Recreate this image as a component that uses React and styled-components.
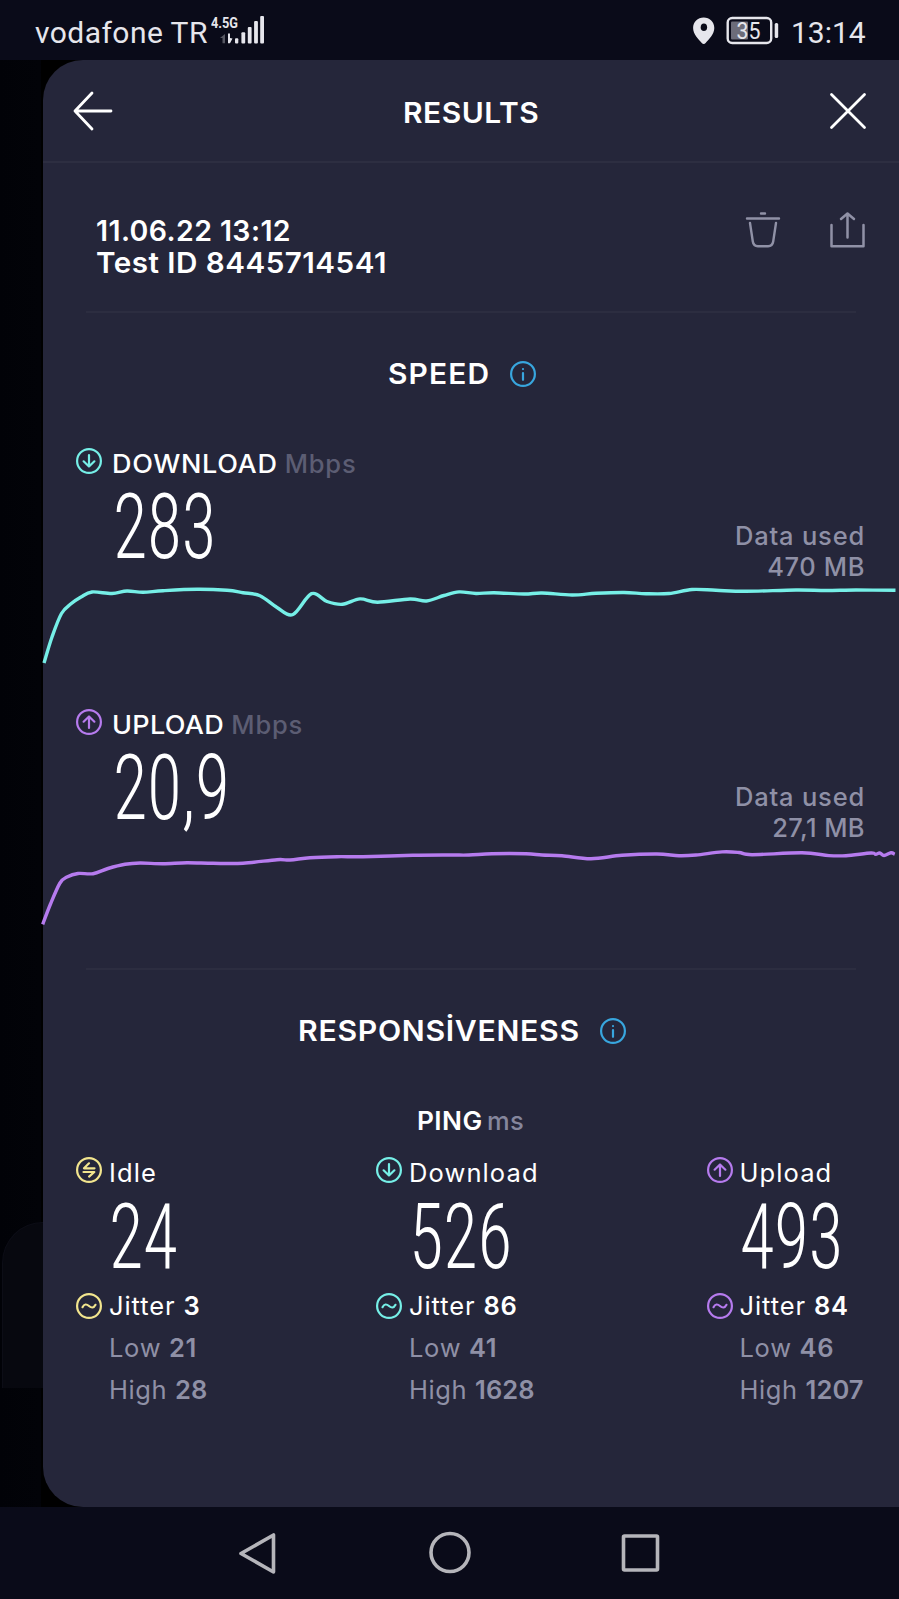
import styled, { createGlobalStyle } from "styled-components";

const GlobalStyle = createGlobalStyle`
  body {
    margin: 0;
    background: #0a0b19;
  }

  * {
    box-sizing: border-box;
  }
`;

const colors = {
  download: "#76efe7",
  upload: "#b67bee",
  idle: "#f2e58e",
  info: "#38a6de",
  muted: "#8f90a6",
};

const Screen = styled.div`
  width: 899px;
  height: 1599px;
  display: flex;
  flex-direction: column;
  overflow: hidden;
  color: #fff;
  font-family: Inter, "Liberation Sans", sans-serif;
`;

const StatusBar = styled.div`
  height: 60px;
  display: flex;
  justify-content: space-between;
  align-items: center;
  padding: 4px 34px 0 35px;
  background: #0a0b19;
  color: #e6e6ec;
  font-family: Roboto, sans-serif;
  font-size: 30px;
  font-weight: 400;
`;

const StatusGroup = styled.div`
  display: flex;
  align-items: center;
`;

const Carrier = styled.span`
  width: 176px;
  letter-spacing: 0.45px;
  white-space: nowrap;
`;

const Clock = styled.span`
  width: 74px;
  margin-left: 11px;
`;

const StatusIcon = styled.svg`
  display: block;
  margin-top: -4px;
`;

const Body = styled.div`
  height: 1447px;
  display: flex;
  background: #000;
`;

const Backdrop = styled.div`
  width: 43px;
  padding: 1162px 0 0 2px;
  background: linear-gradient(90deg, #010207 0, #020308 41px, #000 41px);
`;

const BackdropCard = styled.div`
  height: 166px;
  border: 1px solid #0c0d16;
  border-width: 1px 0 0 1px;
  border-radius: 42px 0 0 0;
  background: #07080f;
`;

const Card = styled.main`
  flex: 1;
  border-radius: 40px 0 0 40px;
  background: #25263a;
`;

const Header = styled.header`
  height: 103px;
  display: flex;
  justify-content: space-between;
  align-items: center;
  padding: 0 32px 0 30px;
  border-bottom: 2px solid #2d2e41;
`;

const HeaderTitle = styled.div`
  padding-top: 4px;
`;

const Text = styled.span`
  display: block;
  width: ${({ $width }) => ($width ? `${$width}px` : "auto")};
  margin-right: ${({ $after }) => $after || 0}px;
  font-size: ${({ $size }) => $size || 25.5}px;
  font-weight: ${({ $weight }) => $weight || 500};
  letter-spacing: ${({ $spacing }) => $spacing || 0}px;
  color: ${({ $color }) => $color || "#fff"};
  line-height: 30px;
  white-space: pre;
  transform: scaleX(${({ $stretch }) => $stretch || 1});
  transform-origin: left center;
`;

const Meta = styled.section`
  height: 148px;
  display: flex;
  justify-content: space-between;
  align-items: flex-start;
  padding: 53px 34px 0 53px;
`;

const MetaLines = styled.div`
  display: flex;
  flex-direction: column;
  gap: 1.7px;
`;

const Actions = styled.div`
  display: flex;
  gap: 48px;
  margin-top: -5px;
`;

const Divider = styled.hr`
  height: 2px;
  margin: ${({ $top }) => $top || 0}px 43px 0;
  border: 0;
  background: #2c2d40;
`;

const SectionTitle = styled.div`
  height: 40px;
  margin-top: 41px;
  padding-right: 18px;
  display: flex;
  justify-content: center;
  align-items: center;
  gap: 19px;
`;

const Speed = styled.section`
  height: 223px;
  margin-top: ${({ $top }) => $top}px;
`;

const SpeedLabel = styled.div`
  height: 30px;
  display: flex;
  align-items: center;
  padding-left: 33px;

  svg {
    margin: -6px 10px 0 0;
  }
`;

const SpeedRow = styled.div`
  height: 92px;
  margin-top: 11px;
  padding: 0 34px 0 70px;
  display: flex;
  justify-content: space-between;
`;

const BigNumber = styled.div`
  height: 76px;
  font-family: Roboto, sans-serif;
  font-stretch: 75%;
  font-size: 90.5px;
  font-weight: 335;
  line-height: 75.5px;
  white-space: nowrap;
  transform: scaleX(0.78);
  transform-origin: left center;
`;

const DataUsed = styled.div`
  display: flex;
  flex-direction: column;
  align-items: flex-end;
  align-self: flex-end;
  gap: 0.7px;
`;

const Chart = styled.svg`
  display: block;
  width: 856px;
  height: 90px;
  overflow: visible;
`;

const PingTitle = styled.div`
  height: 30px;
  margin-top: 55px;
  padding-right: 1px;
  display: flex;
  justify-content: center;
`;

const Metrics = styled.section`
  display: grid;
  grid-template-columns: 300px 330.5px auto;
  margin-top: 22px;
  padding-left: 33px;
`;

const MetricLine = styled.div`
  height: 30px;
  display: flex;
  align-items: center;
  margin-top: ${({ $top }) => $top || 0}px;
  padding-left: ${({ $indent }) => $indent || 0}px;

  svg {
    margin: ${({ $lift }) => -($lift || 0)}px 7px 0 0;
  }
`;

const MetricNumber = styled(BigNumber)`
  margin: 11.5px 0 15.5px 33px;
`;

const NavBar = styled.nav`
  height: 92px;
  display: flex;
  justify-content: center;
  gap: 143px;
  padding-top: 22px;
  background: #0a0b19;
`;

const Badge = ({ color, children }) => (
  <svg width="26" height="26" viewBox="0 0 26 26" fill="none" stroke={color} strokeWidth="2.2" strokeLinecap="round" strokeLinejoin="round">
    <circle cx="13" cy="13" r="11.9" />
    {children}
  </svg>
);

const DownIcon = () => (
  <Badge color={colors.download}>
    <path d="M13 7v11.5M7.6 13.3l5.4 5.2 5.4-5.2" />
  </Badge>
);

const UpIcon = () => (
  <Badge color={colors.upload}>
    <path d="M13 19V7.5M7.6 12.7L13 7.5l5.4 5.2" />
  </Badge>
);

const IdleIcon = () => (
  <Badge color={colors.idle}>
    <path d="M18.5 11.3H8l5-5M7.5 15h10.8l-5.2 4.6" />
  </Badge>
);

const JitterIcon = ({ color }) => (
  <Badge color={color}>
    <path d="M6.5 14.2c1.8-3.4 4-3.4 6.5-1.2s4.7 2.2 6.5-1.2" />
  </Badge>
);

const InfoIcon = () => (
  <Badge color={colors.info}>
    <path d="M13 12v6.8M13 8v.1" />
  </Badge>
);

// Catmull-Rom spline through the samples
const toPath = (points) =>
  points.reduce((path, [x, y], i) => {
    if (i === 0) return `M${x} ${y}`;
    const [x0, y0] = points[i - 2] || points[i - 1];
    const [x1, y1] = points[i - 1];
    const [x3, y3] = points[i + 1] || points[i];
    const c1 = `${x1 + (x - x0) / 6} ${y1 + (y - y0) / 6}`;
    const c2 = `${x - (x3 - x1) / 6} ${y - (y3 - y1) / 6}`;
    return `${path}C${c1} ${c2} ${x} ${y}`;
  }, "");

const downloadSamples = [
  [44, 663], [52, 637], [61.5, 613.5], [71, 603.8], [81, 597], [92, 592],
  [112, 593.5], [127, 591], [143, 592.3], [163, 590.7], [197, 589.3],
  [227, 590.3], [243, 592.7], [260, 595.7], [277, 607.5], [293, 614.5],
  [311.5, 593.7], [327, 601.5], [342.5, 604.3], [360, 598.9],
  [377.5, 602.2], [410, 599], [426.5, 601], [444, 595.5], [459, 591.9],
  [476, 593.5], [494, 592.7], [524, 594], [542, 593], [572, 595],
  [596, 593.3], [624, 592.5], [646, 593.7], [669, 593.5], [692, 589.5],
  [716, 590.3], [746, 591.3], [796, 590], [826, 590.5], [856, 590],
  [895.5, 590.3],
];

const uploadSamples = [
  [42.7, 924.3], [50.5, 904], [60, 883], [67, 877], [78, 873.5],
  [93, 873.7], [108, 868.5], [125, 864.3], [140, 863], [163, 863.7],
  [187, 862.7], [213, 863.3], [243, 863.3], [277, 859.7], [290, 860],
  [310, 857.7], [337, 856.7], [363, 856.7], [413, 855.3], [450, 855],
  [469, 855], [492, 853.7], [526, 853.7], [542, 855], [562, 855.7],
  [591, 858.7], [622, 855.3], [657, 854], [679, 855.7], [696, 855],
  [722, 851.9], [739, 852.5], [752, 854.7], [802, 852.8], [829, 855.6],
  [846, 855.7], [871, 853], [875.7, 854.3], [879.7, 853], [884, 855.5],
  [891, 852.8], [894.7, 854.3],
];

const SpeedSection = ({ icon, label, after, spacing, value, used, usedSpacing, color, samples, originY, top }) => (
  <Speed $top={top}>
    <SpeedLabel>
      {icon}
      <Text $weight={540} $after={after} $spacing={spacing} $stretch={1.06}>{label}</Text>
      <Text $spacing={0.8} $color="#5c5d73">Mbps</Text>
    </SpeedLabel>
    <SpeedRow>
      <BigNumber>{value}</BigNumber>
      <DataUsed>
        <Text $spacing={0.8} $color={colors.muted}>Data used</Text>
        <Text $spacing={usedSpacing} $color={colors.muted}>{used}</Text>
      </DataUsed>
    </SpeedRow>
    <Chart viewBox={`43 ${originY} 856 90`} fill="none">
      <path d={toPath(samples)} stroke={color} strokeWidth="3.4" />
    </Chart>
  </Speed>
);

const Metric = ({ icon, color, label, value, jitter, low, high }) => (
  <div>
    <MetricLine $lift={6}>
      {icon}
      <Text $weight={400} $spacing={1.1}>{label}</Text>
    </MetricLine>
    <MetricNumber>{value}</MetricNumber>
    <MetricLine>
      <JitterIcon color={color} />
      <Text $weight={400} $spacing={0.9}>Jitter </Text>
      <Text $weight={600} $spacing={0.6}>{jitter}</Text>
    </MetricLine>
    <MetricLine $top={12} $indent={33}>
      <Text $weight={400} $spacing={0.7} $color={colors.muted}>Low </Text>
      <Text $weight={600} $spacing={0.6} $color={colors.muted}>{low}</Text>
    </MetricLine>
    <MetricLine $top={11.5} $indent={33}>
      <Text $weight={400} $spacing={0.6} $color={colors.muted}>High </Text>
      <Text $weight={600} $spacing={0.1} $color={colors.muted}>{high}</Text>
    </MetricLine>
  </div>
);

const App = () => {
  return (
    <Screen>
      <GlobalStyle />
      <StatusBar>
        <StatusGroup>
          <Carrier>vodafone TR</Carrier>
          <StatusIcon width="54" height="30" viewBox="211 15 54 30" fill="#e6e6ec">
            <text x="211" y="27.5" fontFamily="Roboto" fontSize="15.5" fontWeight="700" textLength="27" lengthAdjust="spacingAndGlyphs">4.5G</text>
            <path d="M225 34v9.3h-2.5v-5.3H220z" opacity=".35" />
            <path d="M228 33.5h2v4.5l2.5.5-2.5 4.8h-2z" />
            <rect x="235" y="38.3" width="3.3" height="5.2" rx="1" />
            <rect x="241.4" y="32.3" width="3.8" height="11.2" rx="1" />
            <rect x="247.8" y="27" width="3.8" height="16.5" rx="1" />
            <rect x="254.1" y="21" width="3.8" height="22.5" rx="1" />
            <rect x="260.2" y="16" width="3.8" height="27.5" rx="1" />
          </StatusIcon>
        </StatusGroup>
        <StatusGroup>
          <StatusIcon width="87" height="30" viewBox="693 15 87 30" fill="none">
            <path d="M703.7 17.5c6 0 10.6 4.6 10.6 10.5 0 6.5-5.5 11-8.7 15-1 1.200-2.800 1.200-3.800 0-3.200-4-8.700-8.500-8.700-15 0-5.900 4.600-10.500 10.600-10.500z" fill="#e6e6ec" />
            <ellipse cx="703.9" cy="27.3" rx="3.2" ry="3.8" fill="#0a0b19" />
            <rect x="727.7" y="18" width="43.5" height="25" rx="4.5" stroke="#e6e6ec" strokeWidth="2.4" />
            <rect x="731" y="21.5" width="17" height="18" rx="1" fill="#6c6c79" />
            <rect x="774.7" y="23" width="3.5" height="15" rx="1.5" fill="#e6e6ec" />
            <text x="748.5" y="39" textAnchor="middle" fontFamily="Roboto" fontSize="23" fontWeight="400" textLength="24" lengthAdjust="spacingAndGlyphs" fill="#e6e6ec">35</text>
          </StatusIcon>
          <Clock>13:14</Clock>
        </StatusGroup>
      </StatusBar>

      <Body>
        <Backdrop>
          <BackdropCard />
        </Backdrop>
        <Card>
          <Header>
            <svg width="40" height="40" viewBox="0 0 40 40" fill="none" stroke="#fff" strokeWidth="2.8" strokeLinecap="round" strokeLinejoin="round">
              <path d="M38 20H2M19 2L2 20l17 18" />
            </svg>
            <HeaderTitle>
              <Text $size={28.5} $weight={600} $spacing={0.5} $stretch={1.05} $width={137}>RESULTS</Text>
            </HeaderTitle>
            <svg width="38" height="38" viewBox="0 0 38 38" fill="none" stroke="#fff" strokeWidth="2.8" strokeLinecap="round">
              <path d="M2.5 2.5l33 33M35.5 2.5l-33 33" />
            </svg>
          </Header>

          <Meta>
            <MetaLines>
              <Text $size={28.5} $weight={600} $spacing={0.4}>11.06.22 13:12</Text>
              <Text $size={28.5} $weight={600} $spacing={0.45} $stretch={1.04}>Test ID 8445714541</Text>
            </MetaLines>
            <Actions>
              <svg width="36" height="38" viewBox="0 0 36 38" fill="none" stroke="#9091a6" strokeWidth="2.4" strokeLinecap="round" strokeLinejoin="round">
                <path d="M16 2.5h4M2 7.5h32M5 12l2.8 18.5c.5 3 2 4.7 5 4.7h10.4c3 0 4.5-1.7 5-4.7L31 12" />
              </svg>
              <svg width="36" height="38" viewBox="0 0 36 38" fill="none" stroke="#9091a6" strokeWidth="2.5" strokeLinecap="round" strokeLinejoin="round">
                <path d="M2.5 14v21.3h32V14M18.5 26.5V2.5M12 8l6.5-5.5L25 8" />
              </svg>
            </Actions>
          </Meta>
          <Divider />

          <SectionTitle>
            <Text $size={28.5} $weight={600} $spacing={1.1} $stretch={1.05} $width={103}>SPEED</Text>
            <InfoIcon />
          </SectionTitle>
          <SpeedSection
            icon={<DownIcon />}
            label="DOWNLOAD"
            after={16.5}
            spacing={0.6}
            value="283"
            used="470 MB"
            usedSpacing={0.6}
            color={colors.download}
            samples={downloadSamples}
            originY={582}
            top={55}
          />
          <SpeedSection
            icon={<UpIcon />}
            label="UPLOAD"
            after={13.5}
            spacing={0.3}
            value="20,9"
            used="27,1 MB"
            usedSpacing={0.4}
            color={colors.upload}
            samples={uploadSamples}
            originY={843}
            top={38}
          />
          <Divider $top={35} />

          <SectionTitle>
            <Text $size={28.5} $weight={600} $spacing={0.65} $stretch={1.06} $width={283}>RESPONSİVENESS</Text>
            <InfoIcon />
          </SectionTitle>
          <PingTitle>
            <Text $weight={600} $spacing={0.4} $stretch={1.03} $width={70}>PING</Text>
            <Text $color="#85869d" $spacing={0.3}>ms</Text>
          </PingTitle>
          <Metrics>
            <Metric icon={<IdleIcon />} color={colors.idle} label="Idle" value="24" jitter="3" low="21" high="28" />
            <Metric icon={<DownIcon />} color={colors.download} label="Download" value="526" jitter="86" low="41" high="1628" />
            <Metric icon={<UpIcon />} color={colors.upload} label="Upload" value="493" jitter="84" low="46" high="1207" />
          </Metrics>
        </Card>
      </Body>

      <NavBar>
        <svg width="48" height="48" viewBox="0 0 48 48" fill="none" stroke="#b5b5ba" strokeWidth="3.6" strokeLinejoin="round">
          <path d="M38.5 6v37L6 24.5z" />
        </svg>
        <svg width="48" height="48" viewBox="0 0 48 48" fill="none" stroke="#b5b5ba" strokeWidth="3.6">
          <circle cx="24" cy="23.5" r="19" />
        </svg>
        <svg width="48" height="48" viewBox="0 0 48 48" fill="none" stroke="#b5b5ba" strokeWidth="3.6" strokeLinejoin="round">
          <rect x="6.5" y="7" width="34" height="34" rx="1" />
        </svg>
      </NavBar>
    </Screen>
  );
};

export default App;
